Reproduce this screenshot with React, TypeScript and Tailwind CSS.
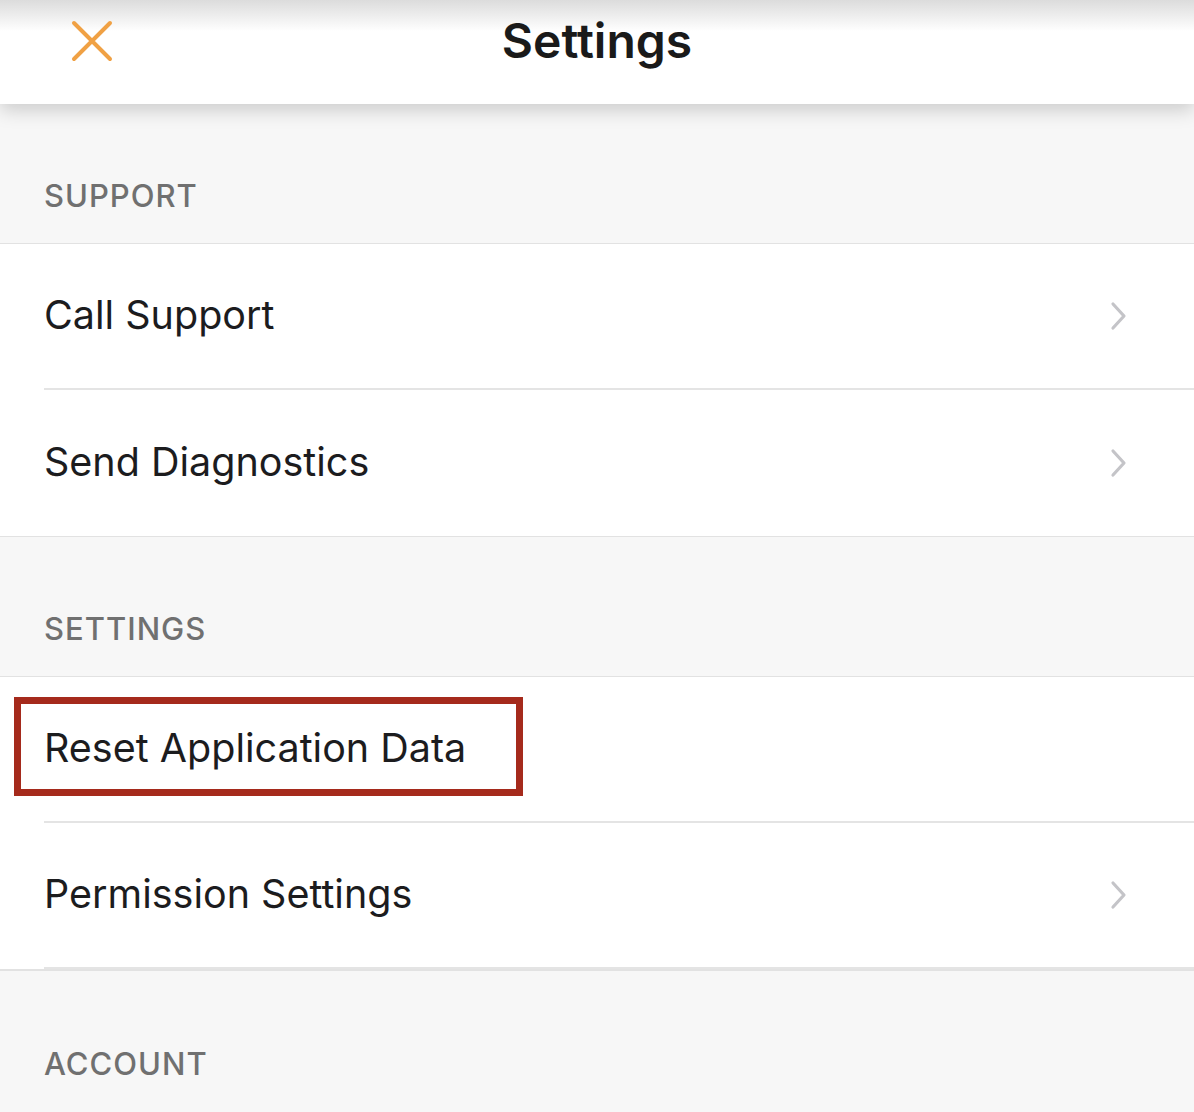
import React from "react";

const Chevron = () => (
  <svg width="20" height="30" viewBox="0 0 20 30" fill="none" className="shrink-0">
    <path d="M5 3 L16 15 L5 27" stroke="#c4c4c8" strokeWidth="3.2" strokeLinecap="round" strokeLinejoin="round" />
  </svg>
);

const SectionHeader = ({ title }: { title: string }) => (
  <div className="h-[140px] bg-[#f7f7f7] flex items-end px-[44px] pb-[32px] border-b border-[#e2e2e2]">
    <span className="text-[31px] leading-none text-[#707070] tracking-[1px] font-medium">{title}</span>
  </div>
);

const Row = ({ label, chevron = true, last = false, boxed = false }: { label: string; chevron?: boolean; last?: boolean; boxed?: boolean }) => (
  <div className="bg-white pl-[44px] relative">
    <div className={`h-[146px] flex items-center pr-[66px] ${last ? "" : "border-b-2 border-[#e4e4e4]"}`}>
      <span className="flex-1 text-[39.5px] text-[#1c1c1e] leading-none">{label}</span>
      {chevron && <Chevron />}
    </div>
    {boxed && (
      <div className="absolute left-[14px] top-[20px] w-[509px] h-[99px] border-[7px] border-[#a52a1c]" />
    )}
  </div>
);

export default function App() {
  return (
    <div className="w-[1194px] h-[1112px] overflow-hidden bg-[#f7f7f7]" style={{ fontFamily: "Inter, 'Liberation Sans', sans-serif" }}>
      <div className="relative z-10 h-[104px] bg-gradient-to-b from-[#dcdcdc] via-white via-[30%] to-white flex items-center justify-center shadow-[0_6px_18px_rgba(0,0,0,0.18)]">
        <svg className="absolute left-[70px] top-[19px]" width="44" height="44" viewBox="0 0 44 44" fill="none">
          <path d="M4 4 L40 40 M40 4 L4 40" stroke="#f0a144" strokeWidth="4" strokeLinecap="round" />
        </svg>
        <span className="text-[48px] font-semibold text-[#1a1a1a] leading-none -mt-[22px]">Settings</span>
      </div>
      <SectionHeader title="SUPPORT" />
      <Row label="Call Support" />
      <Row label="Send Diagnostics" last />
      <div className="border-t border-[#e2e2e2]" />
      <SectionHeader title="SETTINGS" />
      <Row label="Reset Application Data" chevron={false} boxed />
      <Row label="Permission Settings" />
      <div className="border-t-2 border-[#e2e2e2]" />
      <div className="h-[140px] bg-[#f7f7f7] flex items-end px-[44px] pb-[32px]">
        <span className="text-[31px] leading-none text-[#707070] tracking-[1px] font-medium">ACCOUNT</span>
      </div>
    </div>
  );
}
